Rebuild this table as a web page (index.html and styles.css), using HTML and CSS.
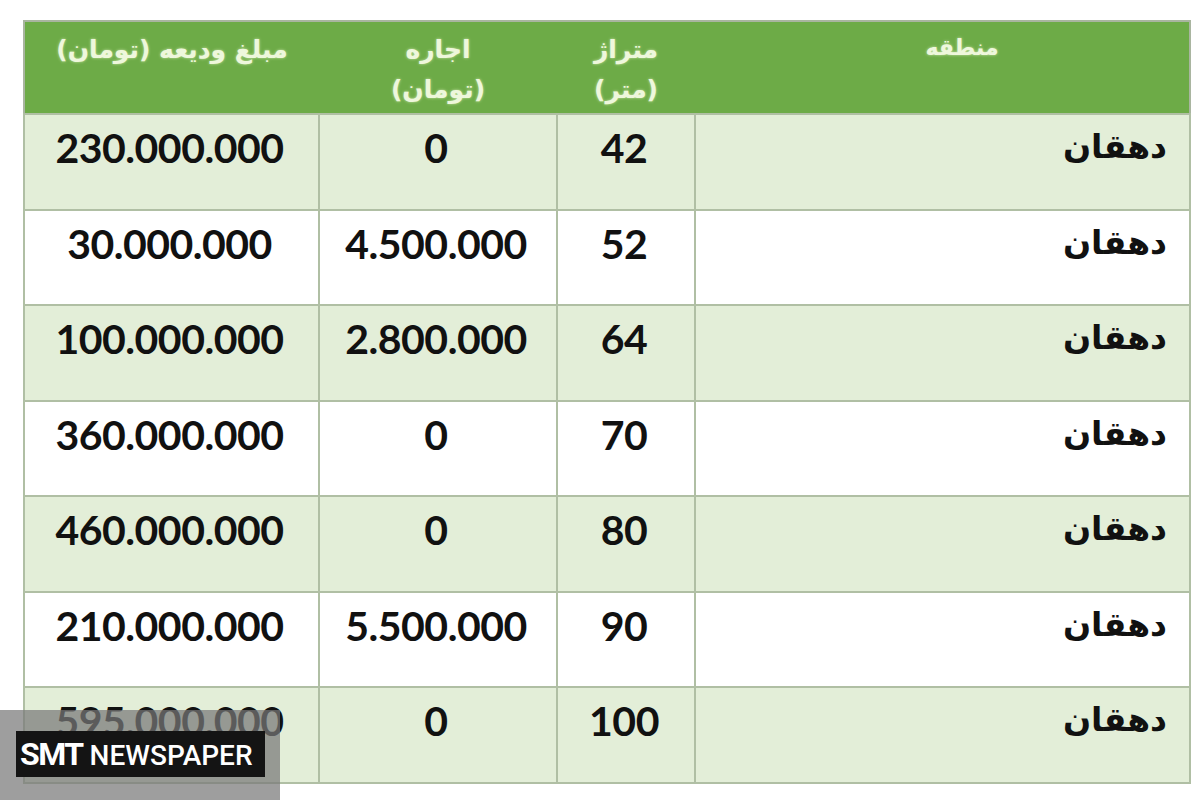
FILE: index.html
```html
<!DOCTYPE html>
<html lang="fa">
<head>
<meta charset="utf-8">
<title>جدول اجاره دهقان</title>
<link rel="stylesheet" href="styles.css">
</head>
<body>
<div class="page">
  <table class="rent-table" dir="rtl">
    <colgroup>
      <col class="c-region">
      <col class="c-area">
      <col class="c-rent">
      <col class="c-deposit">
    </colgroup>
    <thead>
      <tr>
        <th class="h-region">منطقه</th>
        <th>متراژ<br>(متر)</th>
        <th>اجاره<br>(تومان)</th>
        <th>مبلغ ودیعه (تومان)</th>
      </tr>
    </thead>
    <tbody>
      <tr class="band"><td class="region">دهقان</td><td class="num">42</td><td class="num">0</td><td class="num">230.000.000</td></tr>
      <tr><td class="region">دهقان</td><td class="num">52</td><td class="num">4.500.000</td><td class="num">30.000.000</td></tr>
      <tr class="band"><td class="region">دهقان</td><td class="num">64</td><td class="num">2.800.000</td><td class="num">100.000.000</td></tr>
      <tr><td class="region">دهقان</td><td class="num">70</td><td class="num">0</td><td class="num">360.000.000</td></tr>
      <tr class="band"><td class="region">دهقان</td><td class="num">80</td><td class="num">0</td><td class="num">460.000.000</td></tr>
      <tr><td class="region">دهقان</td><td class="num">90</td><td class="num">5.500.000</td><td class="num">210.000.000</td></tr>
      <tr class="band"><td class="region">دهقان</td><td class="num">100</td><td class="num">0</td><td class="num">595.000.000</td></tr>
    </tbody>
  </table>
  <div class="watermark">
    <div class="wm-label"><span class="wm-bold">SMT</span><span class="wm-light">NEWSPAPER</span></div>
  </div>
</div>
</body>
</html>
```

FILE: styles.css
```css
* { box-sizing: border-box; }
html, body {
  margin: 0;
  padding: 0;
  background: #ffffff;
}
.page {
  position: relative;
  width: 1200px;
  height: 800px;
  padding: 20px 0 0 23px;
  overflow: hidden;
}
.rent-table {
  width: 1166px;
  border-collapse: collapse;
  table-layout: fixed;
  border: 2px solid #a9b5a0;
}
.c-region { width: 495px; }
.c-area { width: 138px; }
.c-rent { width: 238px; }
.c-deposit { width: 295px; }

.rent-table th {
  height: 93px;
  background: #6dab47;
  color: #eef7dc;
  font-family: "DejaVu Sans", sans-serif;
  font-weight: bold;
  font-size: 25px;
  line-height: 40px;
  vertical-align: top;
  text-align: center;
  padding: 8px 0 0 0;
  text-shadow: 0 0 3px #c8e3a8;
  border: none;
}
.rent-table th.h-region {
  font-size: 22px;
  padding-top: 6px;
  padding-left: 40px;
}
.rent-table td {
  height: 95.5px;
  border: 2px solid #b0bfa4;
  vertical-align: top;
  padding: 0;
  color: #111111;
  background: #ffffff;
}
.rent-table tr.band td { background: #e3eed8; }

.rent-table td.num {
  direction: ltr;
  text-align: center;
  font-family: "Lato", "Open Sans", sans-serif;
  font-weight: bold;
  font-size: 41px;
  letter-spacing: -0.5px;
  line-height: 48px;
  padding-top: 9px;
  padding-right: 4px;
}
.rent-table td.region {
  text-align: right;
  font-family: "DejaVu Sans", sans-serif;
  font-weight: bold;
  font-size: 33px;
  line-height: 48px;
  padding: 8px 22px 0 0;
}

.watermark {
  position: absolute;
  left: 0;
  top: 710px;
  width: 280px;
  height: 90px;
  background: rgba(120, 120, 120, 0.72);
  padding: 21px 0 0 16px;
}
.wm-label {
  display: flex;
  align-items: baseline;
  gap: 7px;
  width: 249px;
  height: 46px;
  background: #141414;
  color: #ffffff;
  font-family: "Roboto", "Inter", sans-serif;
  line-height: 46px;
  padding-left: 4px;
  white-space: nowrap;
}
.wm-bold {
  font-weight: bold;
  font-size: 32px;
  letter-spacing: -1.5px;
}
.wm-light {
  font-weight: 500;
  font-size: 28px;
  letter-spacing: 0;
}
```
